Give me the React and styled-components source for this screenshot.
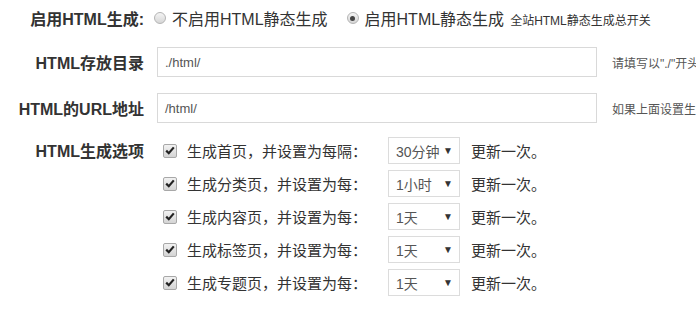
import React from "react";
import styled, { createGlobalStyle } from "styled-components";

const GlobalStyle = createGlobalStyle`
  body {
    margin: 0;
    background: #fff;
    font-family: "Liberation Sans", "Noto Sans CJK SC", sans-serif;
    color: #333;
  }
`;

const Form = styled.div`
  display: flex;
  flex-direction: column;
  width: 696px;
  height: 327px;
  overflow: hidden;
`;

const Row = styled.div`
  display: flex;
  align-items: ${(props) => (props.top ? "flex-start" : "center")};
  height: ${(props) => (props.h ? props.h + "px" : "auto")};
  margin-bottom: ${(props) => props.mb || 0}px;
`;

const Label = styled.div`
  width: 144px;
  flex-shrink: 0;
  text-align: right;
  font-size: 16px;
  font-weight: bold;
  color: #333;
  white-space: nowrap;
  line-height: ${(props) => (props.lh ? props.lh + "px" : "normal")};
`;

const Field = styled.div`
  display: flex;
  align-items: center;
  margin-left: ${(props) => props.ml}px;
  white-space: nowrap;
  min-width: 0;
  overflow: hidden;
`;

const RadioOption = styled.label`
  display: flex;
  align-items: center;
  font-size: 16px;
  color: #333;
  margin-right: ${(props) => props.mr || 0}px;
`;

const RadioDot = styled.span`
  box-sizing: border-box;
  width: 12px;
  height: 12px;
  border-radius: 50%;
  border: 1px solid #b4b4b4;
  background: linear-gradient(#f4f4f4, #d6d6d6);
  margin-right: 6px;
  display: flex;
  align-items: center;
  justify-content: center;
  &::after {
    content: "";
    display: ${(props) => (props.checked ? "block" : "none")};
    width: 5px;
    height: 5px;
    border-radius: 50%;
    background: #444;
  }
`;

const Note = styled.span`
  font-size: 12px;
  color: #333;
  margin-left: 6px;
  padding-top: 2px;
`;

const TextInput = styled.div`
  box-sizing: border-box;
  width: 440px;
  height: 30px;
  flex-shrink: 0;
  border: 1px solid #d9d9d9;
  display: flex;
  align-items: center;
  padding-left: 7px;
  font-size: 13px;
  color: #555;
`;

const Help = styled.span`
  font-size: 12px;
  color: #555;
  margin-left: 15px;
`;

const Options = styled.div`
  display: flex;
  flex-direction: column;
  gap: 6px;
  margin-left: 19px;
`;

const OptionRow = styled.div`
  display: flex;
  align-items: center;
  height: 27px;
  white-space: nowrap;
`;

const CheckBox = styled.span`
  box-sizing: border-box;
  width: 14px;
  height: 14px;
  border: 1px solid #a8a8a8;
  border-radius: 2px;
  background: linear-gradient(#f2f2f2, #d4d4d4);
  display: flex;
  align-items: center;
  justify-content: center;
  margin-right: 10px;
`;

const OptionText = styled.span`
  font-size: 15px;
  color: #333;
  width: 180px;
`;

const Select = styled.div`
  box-sizing: border-box;
  width: 72px;
  height: 27px;
  border: 1px solid #dcdcdc;
  margin-left: 21px;
  display: flex;
  align-items: center;
  justify-content: space-between;
  padding: 0 6px 0 7px;
  font-size: 14px;
  color: #555;
`;

const Arrow = styled.span`
  font-size: 10px;
  color: #333;
`;

const After = styled.span`
  font-size: 15px;
  color: #333;
  margin-left: 11px;
`;

const options = [
  { text: "生成首页，并设置为每隔：", value: "30分钟" },
  { text: "生成分类页，并设置为每：", value: "1小时" },
  { text: "生成内容页，并设置为每：", value: "1天" },
  { text: "生成标签页，并设置为每：", value: "1天" },
  { text: "生成专题页，并设置为每：", value: "1天" },
];

function Check() {
  return (
    <svg width="10" height="9" viewBox="0 0 10 9">
      <path d="M1.2 4.6 L3.8 7.2 L8.8 1.4" fill="none" stroke="#222" strokeWidth="2.2" />
    </svg>
  );
}

export default function App() {
  return (
    <>
      <GlobalStyle />
      <Form>
        <Row h={36} mb={11}>
          <Label>启用HTML生成:</Label>
          <Field ml={10}>
            <RadioOption mr={19}>
              <RadioDot />
              不启用HTML静态生成
            </RadioOption>
            <RadioOption>
              <RadioDot checked />
              启用HTML静态生成
            </RadioOption>
            <Note>全站HTML静态生成总开关</Note>
          </Field>
        </Row>
        <Row h={30} mb={16}>
          <Label>HTML存放目录</Label>
          <Field ml={13}>
            <TextInput>./html/</TextInput>
            <Help>请填写以"./"开头的相对路径</Help>
          </Field>
        </Row>
        <Row h={30} mb={14}>
          <Label>HTML的URL地址</Label>
          <Field ml={13}>
            <TextInput>/html/</TextInput>
            <Help>如果上面设置生成目录，这里填写对应URL</Help>
          </Field>
        </Row>
        <Row top>
          <Label lh={29}>HTML生成选项</Label>
          <Options>
            {options.map((o) => (
              <OptionRow key={o.text}>
                <CheckBox>
                  <Check />
                </CheckBox>
                <OptionText>{o.text}</OptionText>
                <Select>
                  {o.value}
                  <Arrow>▼</Arrow>
                </Select>
                <After>更新一次。</After>
              </OptionRow>
            ))}
          </Options>
        </Row>
      </Form>
    </>
  );
}
